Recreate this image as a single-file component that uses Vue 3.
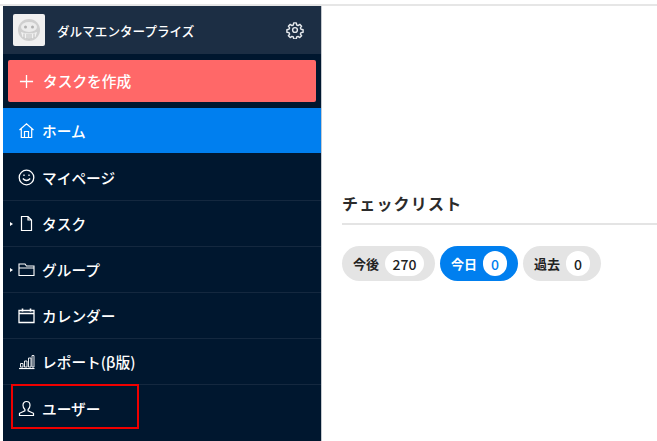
<script setup>
const navItems = [
  { key: "mypage", label: "マイページ", icon: "smile" },
  { key: "task", label: "タスク", icon: "file", caret: true },
  { key: "group", label: "グループ", icon: "folder", caret: true },
  { key: "calendar", label: "カレンダー", icon: "calendar" },
  { key: "report", label: "レポート(β版)", icon: "chart" },
];

const filters = [
  { label: "今後", count: 270 },
  { label: "今日", count: 0, active: true },
  { label: "過去", count: 0 },
];
</script>

<template>
  <div class="page">
    <div class="top-line"></div>
    <div class="layout">
      <aside class="sidebar">
        <header class="org">
          <div class="avatar">
            <svg width="26" height="26" viewBox="0 0 26 26" fill="none">
              <circle cx="13" cy="13" r="11" fill="#cfcfcf" />
              <ellipse cx="13" cy="10" rx="8" ry="5" fill="#ececec" />
              <circle cx="9.500" cy="10" r="1.500" fill="#b0b0b0" />
              <circle cx="16.500" cy="10" r="1.500" fill="#b0b0b0" />
              <path d="M5 15q8 3 16 0l-1.500 5q-6.500 3.500-13 0z" fill="#f2f2f2" />
              <path d="M8 16.500v4.500M11 17v5M13 17v5.500M15 17v5M18 16.500v4.500" stroke="#bcbcbc" />
            </svg>
          </div>
          <span class="org-name">ダルマエンタープライズ</span>
          <svg class="gear" width="18" height="18" viewBox="0 0 24 24" fill="none" stroke="#e4e8ec" stroke-width="1.900" stroke-linejoin="round">
            <circle cx="12" cy="12" r="3.200" />
            <path d="M10.300 2.500h3.400l.5 2.800 1.900.8 2.300-1.600 2.400 2.400-1.600 2.300.8 1.900 2.800.5v3.400l-2.800.5-.8 1.900 1.600 2.300-2.400 2.400-2.300-1.600-1.900.8-.5 2.800h-3.400l-.5-2.800-1.900-.8-2.300 1.600-2.400-2.400 1.600-2.300-.8-1.900-2.800-.5v-3.400l2.800-.5.8-1.900-1.600-2.300 2.400-2.400 2.300 1.600 1.900-.8z" />
          </svg>
        </header>

        <div class="create-wrap">
          <button class="create">
            <svg width="15" height="15" viewBox="0 0 16 16" stroke="#fff" stroke-width="1.400">
              <path d="M8 1v14M1 8h14" />
            </svg>
            <span class="create-label">タスクを作成</span>
          </button>
        </div>

        <nav>
          <a class="nav-item home">
            <span class="icon">
              <svg width="17" height="17" viewBox="0 0 17 17" fill="none" stroke="#fff" stroke-width="1.200">
                <path d="M1.500 8L8.500 1.800 15.500 8M3.300 6.800V15.500H13.700V6.800M6.500 15.500V9.500H10.500V15.500" />
              </svg>
            </span>
            ホーム
          </a>
          <a v-for="item in navItems" :key="item.key" class="nav-item">
            <span v-if="item.caret" class="caret"></span>
            <span class="icon">
              <svg v-if="item.icon === 'smile'" width="17" height="17" viewBox="0 0 17 17" fill="none" stroke="#fff" stroke-width="1.300">
                <circle cx="8.500" cy="8.500" r="7.300" />
                <path d="M4.800 9.500q3.700 4 7.400 0" />
                <path d="M6 5.500v1.500M11 5.500v1.500" />
              </svg>
              <svg v-else-if="item.icon === 'file'" width="17" height="17" viewBox="0 0 17 17" fill="none" stroke="#fff" stroke-width="1.200">
                <path d="M3.500 1.500H10L13.500 5V15.500H3.500ZM10 1.500V5H13.500" />
              </svg>
              <svg v-else-if="item.icon === 'folder'" width="17" height="17" viewBox="0 0 17 17" fill="none" stroke="#fff" stroke-width="1.100">
                <path d="M1 3H7L8.500 5H16V14.500H1ZM1 7H16" />
              </svg>
              <svg v-else-if="item.icon === 'calendar'" width="17" height="17" viewBox="0 0 17 17" fill="none" stroke="#fff" stroke-width="1.300">
                <path d="M1 3.500H16V15.500H1ZM1 6.500H16" />
                <path d="M4.500 1.500V4.500M12.500 1.500V4.500" stroke-width="1.600" />
              </svg>
              <svg v-else-if="item.icon === 'chart'" width="17" height="17" viewBox="0 0 17 17" fill="none" stroke="#fff" stroke-width="0.900">
                <path d="M1 15.500H16.500" stroke-width="1.200" />
                <path d="M2.500 10.500h2.500v3.500h-2.500zM6.500 8h2.500v6h-2.500zM10.500 5h2.500v9h-2.500zM14 2.500h2v11.500h-2z" />
              </svg>
            </span>
            {{ item.label }}
          </a>
          <a class="nav-item user">
            <span class="icon">
              <svg width="17" height="17" viewBox="0 0 17 17" fill="none" stroke="#fff" stroke-width="1.200">
                <path d="M8.500 1.500c2.300 0 3.500 1.700 3.500 3.800 0 2-.9 3.400-1.900 4.200v1.300l5.400 2.500v2.200H1.500v-2.200l5.400-2.500V9.500C5.900 8.700 5 7.300 5 5.300 5 3.200 6.200 1.500 8.500 1.500z" />
              </svg>
            </span>
            ユーザー
          </a>
        </nav>
        <div class="highlight"></div>
      </aside>

      <main class="content">
        <h2 class="title">チェックリスト</h2>
        <div class="filters">
          <div v-for="f in filters" :key="f.label" class="chip" :class="{ active: f.active }">
            <span class="chip-label">{{ f.label }}</span>
            <span class="chip-count">{{ f.count }}</span>
          </div>
        </div>
      </main>
    </div>
  </div>
</template>

<style scoped>
.page {
  width: 657px;
  height: 441px;
  overflow: hidden;
  background: #fff;
  font-family: "Noto Sans CJK JP", "Noto Sans", sans-serif;
}

.top-line {
  height: 2px;
  margin-top: 4px;
  background: #e6e6e6;
}

.layout {
  display: flex;
  height: 435px;
  padding-left: 3px;
}

.sidebar {
  position: relative;
  width: 318px;
  flex-shrink: 0;
  background: #00172f;
  border-right: 1px solid #c5c9ce;
}

.org {
  display: flex;
  align-items: center;
  height: 48px;
  padding: 0 17px 0 10px;
  background: #1c2e44;
  box-sizing: border-box;
}

.avatar {
  display: flex;
  align-items: center;
  justify-content: center;
  width: 32px;
  height: 32px;
  background: #f0f0f0;
  border-radius: 2px;
}

.org-name {
  flex: 1;
  margin-left: 12px;
  color: #fff;
  font-size: 12.600px;
  font-weight: 500;
}

.create-wrap {
  height: 54px;
  padding: 6px 5px;
  box-sizing: border-box;
}

.create {
  display: flex;
  align-items: center;
  gap: 9px;
  width: 100%;
  height: 42px;
  padding: 0 0 0 11px;
  border: none;
  border-radius: 2px;
  background: #ff6868;
  color: #fff;
  font-family: inherit;
  font-size: 14.700px;
  font-weight: 500;
}

.create-label {
  margin-bottom: 2px;
}

.nav-item {
  position: relative;
  display: flex;
  align-items: center;
  height: 46px;
  padding-left: 15px;
  box-sizing: border-box;
  border-bottom: 1px solid #14283f;
  color: #fff;
  font-size: 14.700px;
  font-weight: 500;
}

.nav-item .icon {
  display: flex;
  width: 17px;
  height: 17px;
  margin-right: 7px;
}

.home {
  height: 45px;
  margin-bottom: 2px;
  background: #007fef;
  border-bottom: none;
}

.user {
  border-bottom: none;
}

.caret {
  position: absolute;
  left: 7px;
  top: 50%;
  margin-top: -2px;
  border-left: 3px solid #fff;
  border-top: 2px solid transparent;
  border-bottom: 2px solid transparent;
}

.highlight {
  position: absolute;
  left: 8px;
  top: 378px;
  width: 128px;
  height: 45px;
  box-sizing: border-box;
  border: 2px solid #ef0000;
}

.content {
  flex: 1;
  min-width: 0;
  padding: 183px 0 0 20px;
}

.title {
  margin: 0;
  height: 36px;
  padding-top: 2px;
  box-sizing: border-box;
  border-bottom: 2px solid #e4e4e4;
  color: #2b2b2b;
  font-size: 16px;
  line-height: 24px;
  font-weight: 700;
  letter-spacing: 1.200px;
}

.filters {
  display: flex;
  gap: 5px;
  margin-top: 21px;
}

.chip {
  display: flex;
  align-items: center;
  height: 35px;
  padding: 0 11px;
  border-radius: 18px;
  background: #e4e4e4;
  color: #222;
  font-size: 13px;
  font-weight: 700;
}

.chip-count {
  display: flex;
  align-items: center;
  justify-content: center;
  min-width: 24px;
  height: 25px;
  margin-left: 6px;
  border-radius: 13px;
  background: #fff;
  font-size: 14px;
  font-weight: 500;
}

.chip:first-child .chip-count {
  padding: 0 7.500px;
}

.chip.active {
  background: #007fef;
  color: #fff;
}

.chip.active .chip-count {
  color: #007fef;
}
</style>
